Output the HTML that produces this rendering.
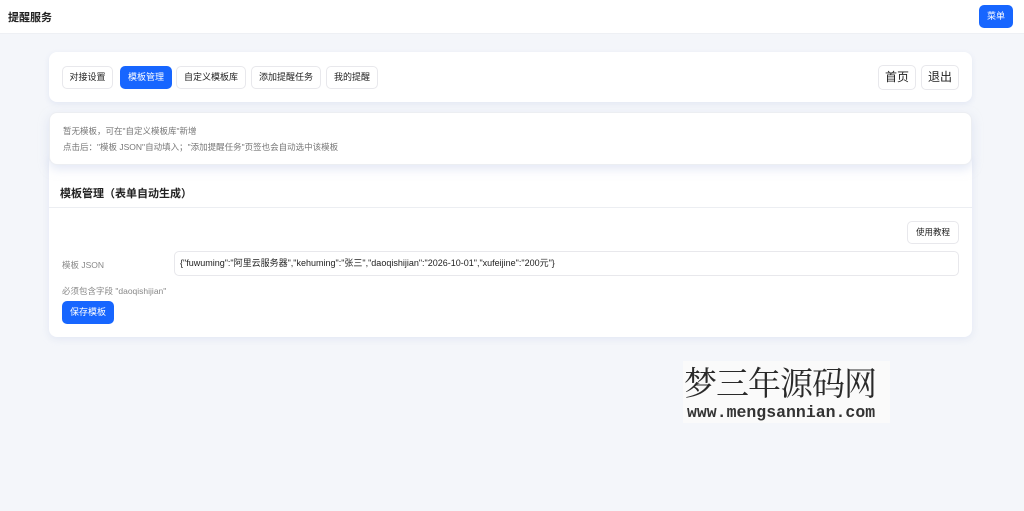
<!DOCTYPE html>
<html><head><meta charset="utf-8"><style>
*{box-sizing:border-box;margin:0;padding:0}
body{width:1024px;height:511px;background:#f4f6fa;font-family:"Liberation Sans","Noto Sans CJK SC",sans-serif;position:relative;overflow:hidden;color:#222}
.hdr{position:absolute;left:0;top:0;width:1024px;height:34px;background:#fff;border-bottom:1px solid #eef0f4}
.hdr .t{position:absolute;left:8px;top:9px;font-size:11px;font-weight:bold;color:#222}
.menu{position:absolute;left:979px;top:5px;width:34px;height:23px;background:#1766ff;border-radius:5px;color:#fff;font-size:9px;text-align:center;line-height:23px}
.card{position:absolute;background:#fff;border-radius:8px}
.b{position:absolute;border:1px solid #e8e8ec;border-radius:5px;background:#fff;font-size:9px;text-align:center;color:#222}
.on{background:#1766ff;color:#fff;border-color:#1766ff}
</style></head><body>
<div class="hdr"><div class="t">提醒服务</div><div class="menu">菜单</div></div>
<div class="card" style="left:49px;top:52px;width:923px;height:50px;box-shadow:0 2px 6px rgba(200,210,235,.4)">
<div class="b" style="left:13px;top:14px;width:51px;height:23px;line-height:21px">对接设置</div>
<div class="b on" style="left:71px;top:14px;width:52px;height:23px;line-height:21px">模板管理</div>
<div class="b" style="left:127px;top:14px;width:70px;height:23px;line-height:21px">自定义模板库</div>
<div class="b" style="left:202px;top:14px;width:70px;height:23px;line-height:21px">添加提醒任务</div>
<div class="b" style="left:277px;top:14px;width:52px;height:23px;line-height:21px">我的提醒</div>
<div class="b" style="left:829px;top:13px;width:38px;height:25px;line-height:23px;font-size:12px">首页</div>
<div class="b" style="left:872px;top:13px;width:38px;height:25px;line-height:23px;font-size:12px">退出</div>
</div>
<div class="card" style="left:49px;top:155px;width:923px;height:182px;box-shadow:0 2px 8px rgba(200,210,235,.4)">
<div style="position:absolute;left:11px;top:30px;font-size:11px;font-weight:bold">模板管理（表单自动生成）</div>
<div style="position:absolute;left:0;top:52px;width:923px;height:1px;background:#eceef2"></div>
<div class="b" style="left:858px;top:66px;width:52px;height:23px;line-height:21px;font-size:8.5px">使用教程</div>
<div style="position:absolute;left:13px;top:104px;font-size:8.5px;color:#888">模板 JSON</div>
<div class="b" style="left:125px;top:96px;width:785px;height:25px;line-height:23px;text-align:left;padding-left:5px;font-size:9px">{"fuwuming":"阿里云服务器","kehuming":"张三","daoqishijian":"2026-10-01","xufeijine":"200元"}</div>
<div style="position:absolute;left:13px;top:130px;font-size:8.5px;color:#888">必须包含字段 "daoqishijian"</div>
<div class="b on" style="left:13px;top:146px;width:52px;height:23px;line-height:21px">保存模板</div>
</div>
<div class="card" style="left:49px;top:112px;width:923px;height:53px;border:1px solid #eceef2;box-shadow:0 4px 10px rgba(200,210,235,.5)">
<div style="position:absolute;left:13px;top:12px;font-size:8.5px;color:#777">暂无模板，可在"自定义模板库"新增</div>
<div style="position:absolute;left:13px;top:28px;font-size:8.5px;color:#777">点击后："模板 JSON"自动填入；"添加提醒任务"页签也会自动选中该模板</div>
</div>
<div style="position:absolute;left:683px;top:361px;width:207px;height:62px;background:#fafafa;overflow:hidden">
<div style="position:absolute;left:1px;top:0;width:260px;white-space:nowrap;font-size:33px;line-height:42px;font-family:'Noto Serif CJK SC',serif;color:#2a2a2a;letter-spacing:-1px">梦三年源码网</div>
<div style="position:absolute;left:4px;top:43px;white-space:nowrap;font-size:16.5px;line-height:18px;font-family:'Liberation Mono',monospace;font-weight:bold;color:#333">www.mengsannian.com</div>
</div>
</body></html>
